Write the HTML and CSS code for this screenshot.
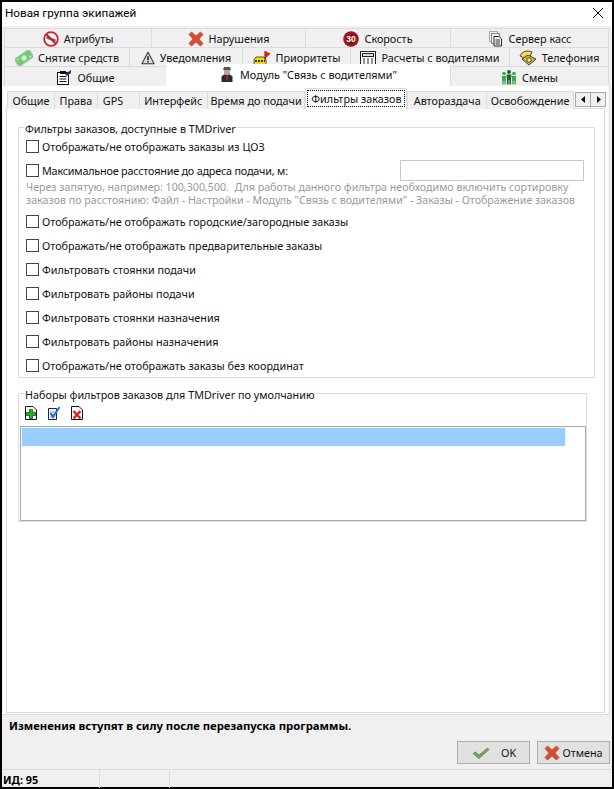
FILE: index.html
```html
<!DOCTYPE html>
<html lang="ru">
<head>
<meta charset="utf-8">
<title>Новая группа экипажей</title>
<link rel="stylesheet" href="styles.css">
</head>
<body>
<svg class="defs" width="0" height="0" aria-hidden="true">
  <symbol id="redx" viewBox="0 0 16 16">
    <path d="M1 3.500 3.500 1 8 5 12.500 1 15 3.500 11 8 15 12.500 12.500 15 8 11 3.500 15 1 12.500 5 8Z" fill="#dc4a32" stroke="#b9604a" stroke-width="1" stroke-linejoin="round"/>
  </symbol>
</svg>
<div class="window">
  <header class="titlebar">
    <span class="title">Новая группа экипажей</span>
    <svg class="close" viewBox="0 0 10 10"><path d="M0 0 10 10M10 0 0 10" stroke="#111" stroke-width="1" fill="none"/></svg>
  </header>

  <nav class="tabrows">
    <div class="tabrow row1">
      <div class="tab"><svg class="ico" viewBox="0 0 16 16"><circle cx="8" cy="8" r="6.800" fill="#fff" stroke="#d0202a" stroke-width="1.800"/><path d="M3.500 6 12.500 10" stroke="#666" stroke-width="2.600"/><path d="M3.200 3.200 12.800 12.800" stroke="#d0202a" stroke-width="2"/></svg><span>Атрибуты</span></div>
      <div class="tab"><svg class="ico"><use href="#redx"/></svg><span>Нарушения</span></div>
      <div class="tab"><svg class="ico" viewBox="0 0 16 16"><circle cx="8" cy="8" r="7.800" fill="#a8141c"/><circle cx="8" cy="8" r="5.800" fill="#8a0f15"/><text x="8" y="11.300" class="speed">30</text></svg><span>Скорость</span></div>
      <div class="tab"><svg class="ico" viewBox="0 0 16 16"><rect x="1.500" y="0.500" width="8" height="10" fill="#eee" stroke="#aaa"/><rect x="3.500" y="2.500" width="8" height="10" fill="#eee" stroke="#888"/><path d="M6 5.500H11L13.500 8V15H6Z" fill="#fff" stroke="#222"/><path d="M7.500 9H12M7.500 11H12M7.500 13H12" stroke="#222"/></svg><span>Сервер касс</span></div>
    </div>
    <div class="tabrow row2">
      <div class="tab"><svg class="ico wide" viewBox="0 0 18 16"><g transform="rotate(-35 9 8)"><rect x="0" y="3.500" width="18" height="9" fill="#7cc57c" stroke="#94d494"/><circle cx="9" cy="8" r="2.500" fill="#d6f0d0"/><path d="M2 5.500H4M14 10.500H16" stroke="#d6f0d0"/></g></svg><span>Снятие средств</span></div>
      <div class="tab"><svg class="ico small" viewBox="0 0 16 16"><path d="M8 1.500 15 14.500H1Z" fill="#ddd" stroke="#333" stroke-width="1.200" stroke-linejoin="round"/><path d="M8 6V10.500M8 11.500V13" stroke="#111" stroke-width="1.600"/></svg><span>Уведомления</span></div>
      <div class="tab"><svg class="ico wide" viewBox="0 0 18 16"><path d="M1 10 3 7H11L13 10V15H1Z" fill="#f5d90a" stroke="#555"/><path d="M2 11H12" stroke="#333" stroke-dasharray="2 1" stroke-width="2"/><path d="M12 1 17.500 3.500 12 9Z" fill="#e8231a"/><path d="M12 1V10" stroke="#7a1a10"/></svg><span>Приоритеты</span></div>
      <div class="tab"><svg class="ico" viewBox="0 0 16 16"><rect x="0.500" y="1.500" width="15" height="13" fill="#fff" stroke="#222"/><rect x="2.500" y="3.500" width="11" height="3" fill="#ddd" stroke="#222"/><path d="M3 9H5M7 9H9M11 9H13M3 11H5M7 11H9M11 11H13M3 13H5M7 13H9M11 13H13" stroke="#222"/></svg><span>Расчеты с водителями</span></div>
      <div class="tab"><svg class="ico wide" viewBox="0 0 18 16"><path d="M3 9 9 5 17 9 10 15Z" fill="#d8b820" stroke="#444"/><path d="M1 6C3 1 9 0 13 2L11 6C9 5 7 5 5 8Z" fill="#f5dc50" stroke="#444"/><circle cx="10" cy="10" r="2.200" fill="#fff3a0" stroke="#444"/></svg><span>Телефония</span></div>
    </div>
    <div class="tabrow row3">
      <div class="tab"><svg class="ico" viewBox="0 0 16 16"><rect x="1.500" y="3.500" width="11" height="12" fill="#fff" stroke="#111"/><rect x="4" y="2" width="6" height="3" fill="#111"/><path d="M3.500 7.500H10.500M3.500 10H10.500M3.500 12.500H10.500" stroke="#111"/><path d="M9 5 15 1V4L11 7Z" fill="#23306e"/></svg><span>Общие</span></div>
      <div class="tab active"><svg class="ico" viewBox="0 0 16 16"><path d="M4 4H12L11 1H5Z" fill="#555"/><rect x="5" y="4" width="6" height="4" fill="#b9a8a0"/><path d="M2.500 16V10.500L5 8.500H11L13.500 10.500V16Z" fill="#2a2a2a"/><path d="M7 9H9L8.500 15H7.500Z" fill="#c8202a"/></svg><span>Модуль "Связь с водителями"</span></div>
      <div class="tab"><svg class="ico" viewBox="0 0 16 16"><g fill="#3aa84a"><circle cx="3" cy="4.500" r="1.800"/><circle cx="13" cy="4.500" r="1.800"/><path d="M.8 7H5.200L4.800 11V15.500H3.400V12H2.600V15.500H1.200V11Z"/><path d="M10.800 7H15.200L14.800 11V15.500H13.400V12H12.600V15.500H11.200V11Z"/></g><circle cx="8" cy="3" r="2" fill="#176b25"/><path d="M5.500 5.500H10.500L10 10.500V15.500H8.400V11H7.600V15.500H6V10.500Z" fill="#176b25"/></svg><span>Смены</span></div>
    </div>
  </nav>

  <section class="panel">
    <div class="subtabs">
      <div class="subtab s1">Общие</div>
      <div class="subtab s2">Права</div>
      <div class="subtab s3">GPS</div>
      <div class="subtab s4">Интерфейс</div>
      <div class="subtab s5">Время до подачи</div>
      <div class="subtab s6 current"><span class="focus">Фильтры заказов</span></div>
      <div class="subtab s7">Автораздача</div>
      <div class="subtab s8">Освобождение</div>
      <div class="scroller">
        <button class="arrow" type="button"><svg viewBox="0 0 5 7" class="tri"><path d="M4 0V7L0 3.500Z"/></svg></button>
        <button class="arrow" type="button"><svg viewBox="0 0 5 7" class="tri"><path d="M1 0V7L5 3.500Z"/></svg></button>
      </div>
    </div>

    <div class="page">
      <div class="group filters">
        <div class="group-title">Фильтры заказов, доступные в TMDriver</div>
        <label class="check"><span class="box"></span>Отображать/не отображать заказы из ЦОЗ</label>
        <div class="check distance">
          <label class="distance-label"><span class="box"></span>Максимальное расстояние до адреса подачи, м:</label>
          <span class="input"></span>
        </div>
        <p class="hint">Через запятую, например: 100,300,500.&nbsp; Для работы данного фильтра необходимо включить сортировку<br>заказов по расстоянию: Файл - Настройки - Модуль "Связь с водителями" - Заказы - Отображение заказов</p>
        <label class="check"><span class="box"></span>Отображать/не отображать городские/загородные заказы</label>
        <label class="check"><span class="box"></span>Отображать/не отображать предварительные заказы</label>
        <label class="check"><span class="box"></span>Фильтровать стоянки подачи</label>
        <label class="check"><span class="box"></span>Фильтровать районы подачи</label>
        <label class="check"><span class="box"></span>Фильтровать стоянки назначения</label>
        <label class="check"><span class="box"></span>Фильтровать районы назначения</label>
        <label class="check"><span class="box"></span>Отображать/не отображать заказы без координат</label>
      </div>

      <div class="group sets">
        <div class="group-title">Наборы фильтров заказов для TMDriver по умолчанию</div>
        <div class="toolbar">
          <svg class="tool" viewBox="0 0 12 14"><path d="M.5.5H8L11.500 4V13.500H.5Z" fill="#fff" stroke="#111"/><path d="M4.500 3.500H7.500V6.500H10.500V9.500H7.500V12.500H4.500V9.500H1.500V6.500H4.500Z" fill="#22b02c" stroke="#0b5c10" stroke-width=".8"/></svg>
          <svg class="tool" viewBox="0 0 12 14"><path d="M.5 2.500H8.500V13.500H.5Z" fill="#eef2ff" stroke="#223"/><path d="M2 6H7M2 8.500H6M2 11H7" stroke="#99a"/><path d="M2.500 7 5 11 11.500 1" fill="none" stroke="#1c6fe0" stroke-width="2"/></svg>
          <svg class="tool" viewBox="0 0 12 14"><path d="M.5.5H8L11.500 4V13.500H.5Z" fill="#fff" stroke="#111"/><path d="M2.500 5 9.500 12.500M9.500 5 2.500 12.500" stroke="#e01a1a" stroke-width="2.400"/></svg>
        </div>
        <div class="list"><div class="selected"></div></div>
      </div>
    </div>
  </section>

  <div class="notice">Изменения вступят в силу после перезапуска программы.</div>
  <div class="actions">
    <button class="btn ok" type="button"><svg class="btn-ico" viewBox="0 0 18 12"><path d="M1 6.500 3.500 5 7 8 15.500 1 17 2.500 7 11.500Z" fill="#74a84a" stroke="#5c8a3c" stroke-width=".8" stroke-linejoin="round"/></svg><span>OK</span></button>
    <button class="btn" type="button"><svg class="btn-x"><use href="#redx"/></svg><span>Отмена</span></button>
  </div>
  <footer class="status">
    <div class="cell id">ИД: 95</div>
    <div class="cell c2"></div>
    <div class="cell"></div>
  </footer>
</div>
</body>
</html>
```
FILE: styles.css
```css
* { box-sizing: border-box; }
html, body { margin: 0; padding: 0; }
body { width: 614px; height: 789px; overflow: hidden; background: #000; font-family: "Noto Sans", "Liberation Sans", sans-serif; font-size: 10.8px; color: #111; }
.defs { position: absolute; }
.window { width: 614px; height: 789px; border: 2px solid #000; background: #f0f0f0; display: flex; flex-direction: column; }

.titlebar { height: 24px; flex: none; background: #fff; display: flex; align-items: center; justify-content: space-between; padding: 0 9px 2px 3px; }
.title { font-family: Roboto, "Noto Sans", sans-serif; font-size: 11.7px; color: #000; }
.close { width: 10px; height: 10px; display: block; }

.tabrows { flex: none; padding: 2px 0 0 2px; }
.tabrow { display: grid; height: 19px; }
.row1 { grid-template-columns: 147px 154px 145px 158px; }
.row2 { grid-template-columns: 125px 113px 108px 159px 99px; }
.row3 { grid-template-columns: 162px 284px 158px; height: 20px; }
.tab { display: flex; align-items: center; justify-content: center; gap: 5px; border: 1px solid #dcdcdc; border-bottom: 0; margin-right: -1px; background: #f0f0f0; padding-top: 1px; white-space: nowrap; }
.tab.active { background: #fff; margin-top: -2px; position: relative; z-index: 1; padding: 0 0 2px; border: 0; margin-right: 0; height: 22px; }
.ico { width: 16px; height: 16px; flex: none; display: block; }
.ico.wide { width: 18px; }
.ico.small { width: 14px; height: 14px; }
.speed { font: bold 8.5px "Liberation Sans", sans-serif; fill: #fff; text-anchor: middle; }

.panel { flex: none; width: 607px; height: 629px; margin-left: 1px; background: #fff; border-right: 1px solid #dcdcdc; border-bottom: 1px solid #dcdcdc; padding: 3px 4px 1px 3px; display: flex; flex-direction: column; }
.subtabs { display: flex; align-items: flex-end; height: 20px; padding-left: 1px; flex: none; position: relative; z-index: 1; }
.subtab { height: 18px; display: flex; align-items: center; justify-content: center; background: #f0f0f0; border: 1px solid #dcdcdc; border-bottom: 0; margin-right: -1px; white-space: nowrap; padding-bottom: 1px; }
.s1 { width: 48px; } .s2 { width: 44px; } .s3 { width: 43px; justify-content: flex-start; padding-left: 5px; } .s4 { width: 69px; } .s5 { width: 99px; } .s6 { width: 102px; } .s7 { width: 80px; } .s8 { width: 88px; }
.subtab.current { height: 21px; background: #fff; padding-bottom: 2px; margin-right: 0; margin-left: 1px; }
.focus { border: 1px dotted #000; padding: 1px 3px; width: 98px; height: 17px; display: flex; align-items: center; justify-content: center; }
.scroller { display: flex; margin-left: 2px; align-self: flex-start; margin-top: 3px; }
.arrow { width: 16px; height: 15px; margin: 0 -1px 0 0; padding: 0; background: #f0f0f0; border: 1px solid #a8a8a8; display: flex; align-items: center; justify-content: center; }
.tri { width: 5px; height: 7px; display: block; fill: #111; }

.page { flex: 1; border: 1px solid #dcdcdc; background: #fff; padding: 18px 11px 0; margin-top: -1px; }
.group { border: 1px solid #dcdcdc; }
.group-title { margin: -7px 0 0 5px; width: fit-content; background: #fff; padding: 0 1px; height: 13px; line-height: 15px; color: #111; }
.filters { width: 577px; height: 251px; }
.check { display: flex; align-items: center; height: 24px; white-space: nowrap; margin-left: 7px; }
.box { width: 13px; height: 13px; border: 1px solid #444; background: #fff; margin-right: 3px; flex: none; }
.distance { justify-content: space-between; height: 25px; padding-right: 10px; }
.distance-label { display: flex; align-items: center; letter-spacing: -.2px; }
.input { width: 184px; height: 21px; border: 1px solid #c8c8c8; background: #fff; }
.hint { margin: -2px 0 2px 7px; color: #9a9a9a; font-size: 10.65px; line-height: 13px; white-space: nowrap; height: 26px; }

.sets { width: 569px; margin-top: 15px; height: 129px; }
.toolbar { display: flex; gap: 11px; padding: 6px 0 0 6px; height: 26px; align-items: flex-start; }
.tool { width: 12px; height: 14px; flex: none; display: block; }
.list { width: 566px; height: 95px; margin-left: 1px; border: 1px solid #a9a9a9; padding: 1px; background: #fff; }
.selected { width: 543px; height: 18px; background: #99ccff; box-shadow: 0 0 0 1px #eef6ff; }

.notice { flex: none; height: 26px; padding: 3px 0 0 7px; font-size: 11.3px; line-height: 15px; font-weight: 700; color: #000; white-space: nowrap; }
.actions { flex: none; display: flex; justify-content: flex-end; gap: 7px; height: 28px; padding-right: 2px; }
.btn { width: 73px; height: 23px; background: #e1e1e1; border: 1px solid #adadad; display: flex; align-items: center; justify-content: center; gap: 2px; font: inherit; color: #111; padding: 0; }
.btn.ok { justify-content: flex-start; padding-left: 14px; gap: 11px; }
.btn-ico { width: 18px; height: 12px; display: block; flex: none; }
.btn-x { width: 16px; height: 16px; display: block; flex: none; }

.status { flex: 1; display: flex; border-top: 1px solid #dcdcdc; }
.cell { border-right: 1px solid #dcdcdc; width: 70px; }
.cell.id { width: 98px; padding: 1px 0 0 1px; font-weight: 700; line-height: 17px; color: #000; }
.cell.c2 { width: 70px; }
.cell:last-child { border: 0; }
```
